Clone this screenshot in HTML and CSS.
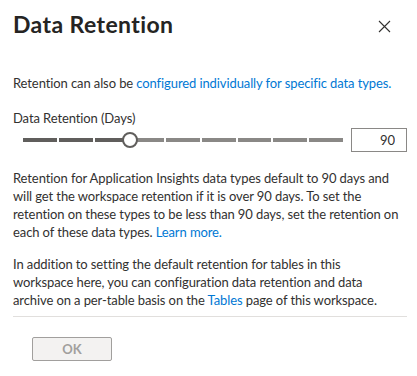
FILE: index.html
```html
<!DOCTYPE html>
<html lang="en">
<head>
    <meta charset="UTF-8">
    <title>Data Retention</title>
    <link rel="stylesheet" href="styles.css">
</head>
<body>
    <div class="panel">
        <div class="header">
            <h1>Data Retention</h1>
            <button class="close" aria-label="Close">
                <svg width="13" height="13" viewBox="0 0 13 13"><path d="M1 1 L12 12 M12 1 L1 12" stroke="#323130" stroke-width="1.1" fill="none"/></svg>
            </button>
        </div>

        <p class="intro">Retention can also be <a href="#">configured individually for specific data types.</a></p>

        <div class="field">
            <label class="field-label">Data Retention (Days)</label>
            <div class="slider-row">
                <div class="slider">
                    <div class="track">
                        <span class="seg on"></span>
                        <span class="seg on"></span>
                        <span class="seg on"></span>
                        <span class="seg"></span>
                        <span class="seg"></span>
                        <span class="seg"></span>
                        <span class="seg"></span>
                        <span class="seg"></span>
                        <span class="seg"></span>
                    </div>
                    <div class="thumb" style="left: 33.3%;"></div>
                </div>
                <input type="text" class="days" value="90">
            </div>
        </div>

        <p class="info">Retention for Application Insights data types default to 90 days and will get the workspace retention if it is over 90 days. To set the retention on these types to be less than 90 days, set the retention on each of these data types. <a href="#">Learn more.</a></p>

        <p class="info">In addition to setting the default retention for tables in this workspace here, you can configuration data retention and data archive on a per-table basis on the <a href="#">Tables</a> page of this workspace.</p>

        <div class="footer">
            <button class="btn" disabled>OK</button>
        </div>
    </div>
</body>
</html>
```

FILE: styles.css
```css
* {
    margin: 0;
    padding: 0;
    box-sizing: border-box;
}

body {
    font-family: Lato, 'Noto Sans', sans-serif;
    font-size: 13px;
    letter-spacing: -0.1px;
    color: #323130;
    background: white;
}

a {
    color: #0078d4;
    text-decoration: none;
}

.panel {
    padding: 0 10px 0 13px;
}

.header {
    display: flex;
    justify-content: space-between;
    align-items: center;
    height: 46px;
    padding-top: 2px;
}

.header h1 {
    font-size: 23px;
    font-weight: 700;
    letter-spacing: 0.4px;
    color: #252423;
}

.close {
    background: none;
    border: none;
    width: 32px;
    height: 32px;
    display: flex;
    align-items: center;
    justify-content: center;
    margin: 4px 7px 0 0;
}

.intro {
    margin-top: 28px;
    line-height: 18px;
}

.field {
    margin-top: 17px;
}

.field-label {
    display: block;
    line-height: 18px;
}

.slider-row {
    display: flex;
    align-items: center;
    gap: 8px;
    margin-top: 1px;
}

.slider {
    position: relative;
    flex: 1;
    height: 24px;
    margin-left: 10px;
    display: flex;
    align-items: center;
}

.track {
    display: flex;
    gap: 2px;
    width: 100%;
    height: 4px;
}

.seg {
    flex: 1;
    background: #8a8886;
}

.seg.on {
    background: #605e5c;
}

.thumb {
    position: absolute;
    top: 50%;
    width: 16px;
    height: 16px;
    margin: -8px 0 0 -8px;
    border: 2px solid #605e5c;
    border-radius: 50%;
    background: white;
}

.days {
    width: 56px;
    height: 24px;
    border: 1px solid #8a8886;
    font-family: inherit;
    font-size: 13px;
    color: #323130;
    text-align: right;
    padding: 0 11px;
}

.info {
    max-width: 388px;
    margin-top: 17px;
    line-height: 18px;
}

.info + .info {
    margin-top: 14px;
}

.footer {
    margin-top: 7px;
    border-top: 1px solid #e1dfdd;
    padding: 20px 0 0 19px;
}

.btn {
    width: 80px;
    height: 24px;
    background: #f3f2f1;
    border: 1px solid #a19f9d;
    border-radius: 2px;
    font-family: inherit;
    font-size: 13px;
    font-weight: 700;
    color: #a19f9d;
}
```
